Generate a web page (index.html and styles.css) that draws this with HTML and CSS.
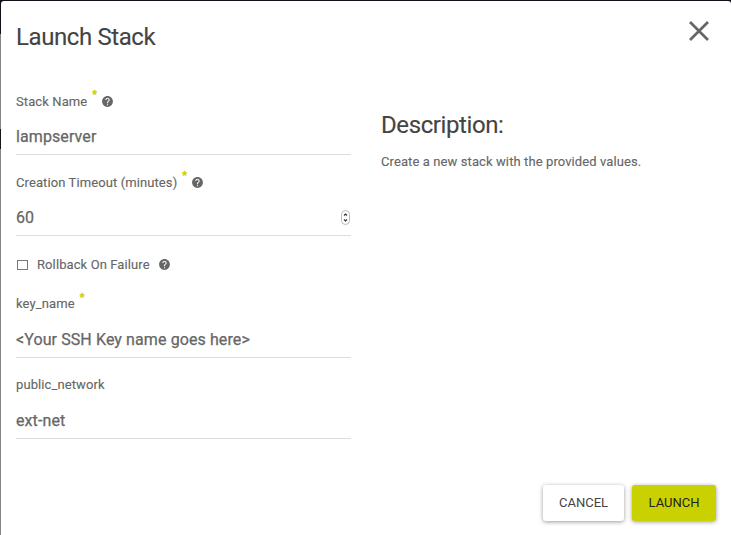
FILE: index.html
```html
<!DOCTYPE html>
<html lang="en">
<head>
<meta charset="utf-8">
<title>Launch Stack</title>
<link rel="stylesheet" href="styles.css">
</head>
<body>
<svg width="0" height="0" class="defs"><symbol id="help" viewBox="0 0 24 24"><path d="M12 2C6.48 2 2 6.48 2 12s4.48 10 10 10 10-4.480 10-10S17.520 2 12 2zm1 17h-2v-2h2v2zm2.070-7.750l-.9.920C13.450 12.900 13 13.500 13 15h-2v-.5c0-1.100.450-2.100 1.170-2.830l1.240-1.260c.370-.36.590-.86.590-1.410 0-1.100-.9-2-2-2s-2 .9-2 2H8c0-2.210 1.790-4 4-4s4 1.790 4 4c0 .880-.36 1.680-.93 2.250z"/></symbol></svg>
<div class="modal">
  <header class="modal-header">
    <h1>Launch Stack</h1>
    <svg class="close" viewBox="0 0 20 20"><path d="M1 1L19 19M19 1L1 19"/></svg>
  </header>
  <main class="modal-body">
    <form class="fields">
      <div class="field">
        <div class="label">Stack Name<span class="required">*</span><svg class="help"><use href="#help"/></svg></div>
        <div class="value">lampserver</div>
      </div>
      <div class="field">
        <div class="label">Creation Timeout (minutes)<span class="required">*</span><svg class="help"><use href="#help"/></svg></div>
        <div class="value">60<svg class="stepper" viewBox="0 0 9 15"><rect x=".5" y=".5" width="8" height="14" rx="4"/><path d="M3 5.500L4.500 4L6 5.500M3 9.500L4.500 11L6 9.500"/></svg></div>
      </div>
      <div class="check-row"><span class="checkbox"></span><span>Rollback On Failure</span><svg class="help"><use href="#help"/></svg></div>
      <div class="field plain">
        <div class="label">key_name<span class="required">*</span></div>
        <div class="value">&lt;Your SSH Key name goes here&gt;</div>
      </div>
      <div class="field plain">
        <div class="label">public_network</div>
        <div class="value">ext-net</div>
      </div>
    </form>
    <section class="description">
      <h2>Description:</h2>
      <p>Create a new stack with the provided values.</p>
    </section>
  </main>
  <footer class="modal-footer">
    <button class="btn">CANCEL</button>
    <button class="btn primary">LAUNCH</button>
  </footer>
</div>
</body>
</html>
```
FILE: styles.css
```css
* { box-sizing: border-box; }
body {
  margin: 0;
  height: 535px;
  padding: 1px 0 0 1px;
  overflow: hidden;
  background: linear-gradient(#111018 34px, #858585 34px, #858585 129px, #17151b 129px, #17151b 149px, #858585 149px);
  color: #666;
  font-family: Roboto, sans-serif;
  font-size: 13px;
  letter-spacing: .1px;
  -webkit-text-stroke: .12px;
}
.defs { display: block; }
.modal {
  display: flex;
  flex-direction: column;
  height: 534px;
  background: #fff;
  border-radius: 3px 3px 0 0;
}
.modal-header {
  display: flex;
  justify-content: space-between;
  height: 91px;
  padding: 20px 22px 0 15px;
}
h1, h2 {
  margin: 0;
  color: #444;
  font-size: 24px;
  font-weight: 400;
  line-height: 32px;
  letter-spacing: -.4px;
}
.close { width: 20px; height: 20px; fill: none; stroke: #666; stroke-width: 2.700; }
.modal-body {
  display: flex;
  flex: 1;
  gap: 30px;
  padding-left: 15px;
}
.fields { width: 335px; }
.field { height: 81px; }
.label { display: flex; align-items: center; height: 20px; line-height: 20px; }
.required {
  align-self: flex-start;
  margin: -3px 0 0 5px;
  color: #c9d200;
  font-size: 11px;
  line-height: 12px;
  -webkit-text-stroke: .5px;
}
.help { width: 13px; height: 13px; margin: 0 0 0 4px; fill: #666; }
.label .help { margin: -1px 0 0 3.5px; }
.value {
  display: flex;
  align-items: center;
  justify-content: space-between;
  height: 43px;
  padding-top: 7px;
  border-bottom: 1px solid #ddd;
  font-size: 16px;
  -webkit-text-stroke: .25px;
}
.plain .label { height: 18px; line-height: 18px; }
.plain .value { height: 45px; padding-top: 9px; }
.stepper { width: 9px; height: 15px; margin-right: 1px; fill: #fff; stroke: #bbb; }
.stepper path { fill: none; stroke: #333; stroke-width: 1.2; }
.check-row { display: flex; align-items: center; height: 20px; margin: 0 0 21px; }
.checkbox { width: 11px; height: 10px; margin: 1px 9px 0 1px; border: 1px solid #777; }
.check-row .help { margin: 1px 0 0 8px; }
.description { padding-top: 17px; }
.description p { margin: 13px 0 0; line-height: 16px; }
.modal-footer {
  display: flex;
  justify-content: flex-end;
  gap: 8px;
  height: 50px;
  padding-right: 15px;
}
.btn {
  width: 81px;
  height: 36px;
  padding: 0 0 2px;
  border: 0;
  border-radius: 3px;
  background: #fff;
  box-shadow: 0 1px 4px rgba(0, 0, 0, .4);
  color: #444;
  font: 13px Roboto, sans-serif;
  -webkit-text-stroke: 0;
}
.primary { width: 84px; background: #c9d200; color: #222; }
```
